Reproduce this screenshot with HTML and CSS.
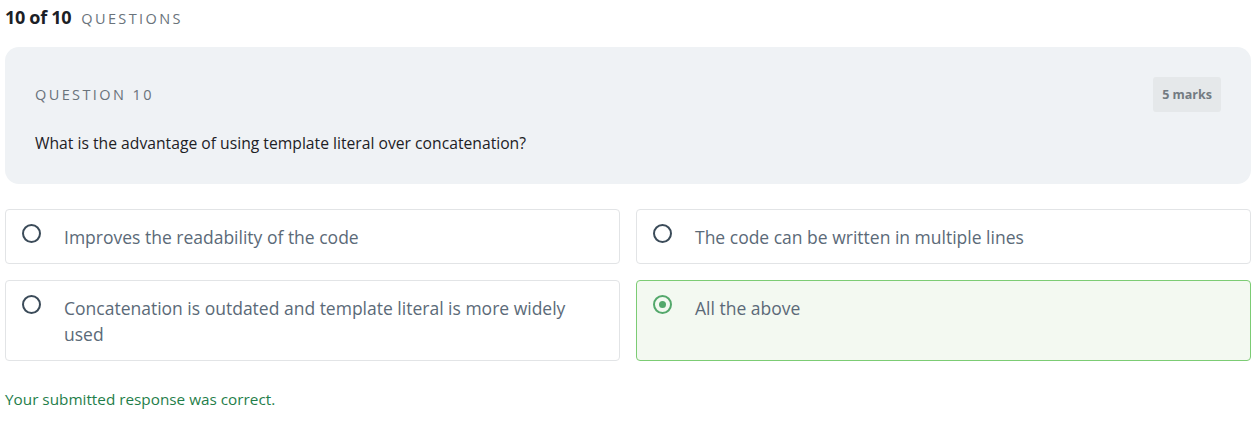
FILE: index.html
```html
<!DOCTYPE html>
<html>
<head>
<meta charset="utf-8">
<link rel="stylesheet" href="styles.css">
</head>
<body>
<div class="page">
  <div class="progress"><span class="count">10 of 10</span><span class="label">QUESTIONS</span></div>
  <div class="qcard">
    <div class="qhead">
      <div class="qnum">QUESTION 10</div>
      <div class="marks">5 marks</div>
    </div>
    <div class="qtext">What is the advantage of using template literal over concatenation?</div>
  </div>
  <div class="options">
    <div class="opt"><span class="radio"></span><span class="otext">Improves the readability of the code</span></div>
    <div class="opt"><span class="radio"></span><span class="otext">The code can be written in multiple lines</span></div>
    <div class="opt"><span class="radio"></span><span class="otext">Concatenation is outdated and template literal is more widely used</span></div>
    <div class="opt selected"><span class="radio"></span><span class="otext">All the above</span></div>
  </div>
  <div class="feedback">Your submitted response was correct.</div>
</div>
</body>
</html>
```
FILE: styles.css
```css
* { box-sizing: border-box; }
body { margin: 0; background: #fff; font-family: "Open Sans", "Noto Sans", sans-serif; color: #1d2125; }
.page { padding: 5px 6px 0 5px; }
.progress { display: flex; align-items: baseline; gap: 10px; height: 25px; }
.count { font-size: 18px; font-weight: 700; color: #1b2026; letter-spacing: -0.3px; }
.label { font-size: 14.5px; letter-spacing: 2.4px; color: #6a737b; }
.qcard { margin-top: 17px; background: #eff2f5; border-radius: 14px; padding: 30px 30px 30px 30px; height: 137px; }
.qhead { display: flex; justify-content: space-between; align-items: center; }
.qnum { font-size: 14.5px; letter-spacing: 2.4px; color: #6a737b; }
.marks { background: #e5e8ea; color: #737b82; font-size: 12.5px; font-weight: 700; padding: 9px 9px; border-radius: 3px; }
.qtext { margin-top: 20px; font-size: 15.7px; color: #1d2125; }
.options { margin-top: 25px; display: grid; grid-template-columns: 1fr 1fr; gap: 16px; }
.opt { display: flex; align-items: flex-start; gap: 23px; border: 1px solid #e2e4e6; border-radius: 4px; padding: 14px 40px 13px 16px; min-height: 55px; }
.radio { flex: none; width: 19px; height: 19px; border: 2px solid #3b4b59; border-radius: 50%; margin-top: 0; position: relative; }
.otext { font-size: 17.5px; line-height: 26px; color: #5b6a78; }
.selected { background: #f3f9f1; border-color: #7ccc74; }
.selected .radio { border-color: #53a86b; }
.selected .radio::after { content: ""; position: absolute; left: 4px; top: 4px; width: 7px; height: 7px; border-radius: 50%; background: #53a86b; }
.feedback { margin-top: 28px; font-size: 15.3px; color: #1f7e4a; }
```
